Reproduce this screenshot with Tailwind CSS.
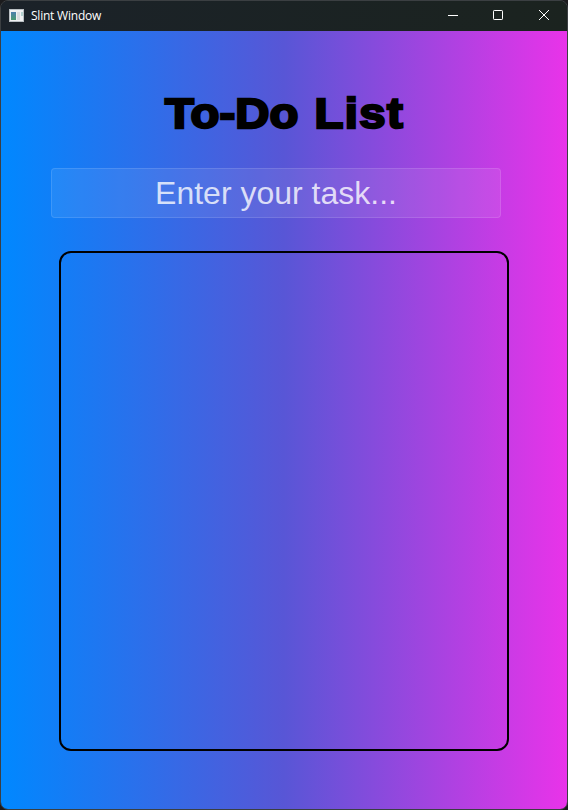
<!DOCTYPE html>
<html lang="en">
<head>
<meta charset="utf-8">
<title>Slint Window</title>
<script src="https://cdn.jsdelivr.net/npm/@tailwindcss/browser@4"></script>
</head>
<body class="h-[810px] w-[568px] overflow-hidden bg-[#1b1b1d]">
<div class="flex h-[810px] w-[568px] flex-col overflow-hidden rounded-[8px] border border-[#3b3f42]">
  <header class="flex h-[30px] shrink-0 items-center bg-linear-to-r from-[#1b2229] to-[#1b231f] text-white">
    <svg class="ml-2 -mt-[2px] h-[13px] w-[15px]" viewBox="0 0 15 13">
      <defs><linearGradient id="pane" x2="0" y2="1"><stop stop-color="#4d7fae"/><stop offset="1" stop-color="#4b9a70"/></linearGradient></defs>
      <rect width="15" height="13" fill="#b9bfc3"/><rect x="1" y="1" width="13" height="11" fill="#f0f1f2"/>
      <rect x="2" y="3" width="5" height="8" fill="url(#pane)"/><rect x="8" y="3" width="3" height="8" fill="#dadddf"/><rect x="12" y="3" width="2" height="4" fill="#b4d2d0"/>
    </svg>
    <span class="ml-[7px] font-['Open_Sans',sans-serif] text-[12px] tracking-[-0.22px]">Slint Window</span>
    <div class="ml-auto flex">
      <svg class="h-[30px] w-[45px]" viewBox="0 0 45 30" stroke="white" fill="none"><path d="M17 14.5H27"/></svg>
      <svg class="h-[30px] w-[45px]" viewBox="0 0 45 30" stroke="white" fill="none"><rect x="17.5" y="9.5" width="9" height="9" rx=".7"/></svg>
      <svg class="h-[30px] w-[46px]" viewBox="0 0 46 30" stroke="white" fill="none"><path d="M18 9L28 19M28 9L18 19"/></svg>
    </div>
  </header>
  <main class="flex grow flex-col bg-[linear-gradient(90deg,#0088ff,#5856d6_50%,#e933e9)]">
    <h1 class="mt-[56px] ml-[163.5px] flex h-[52px] w-max origin-left scale-x-[1.1] items-center gap-[14.5px] whitespace-nowrap font-['Liberation_Sans',sans-serif] text-[43px] leading-[52px] font-bold text-black [-webkit-text-stroke:2.4px_black]"><span class="tracking-[0.1px]">To-Do</span> <span class="tracking-[1.2px]">List</span></h1>
    <div class="mt-[29px] ml-[50px] flex h-[50px] w-[450px] items-center justify-center rounded-[4px] border border-white/12 bg-white/8 font-['Liberation_Sans',sans-serif] text-[32px] text-white/78">Enter your task...</div>
    <div class="mt-[33px] ml-[58px] h-[500px] w-[450px] rounded-[12px] border-2 border-black"></div>
  </main>
</div>
</body>
</html>
